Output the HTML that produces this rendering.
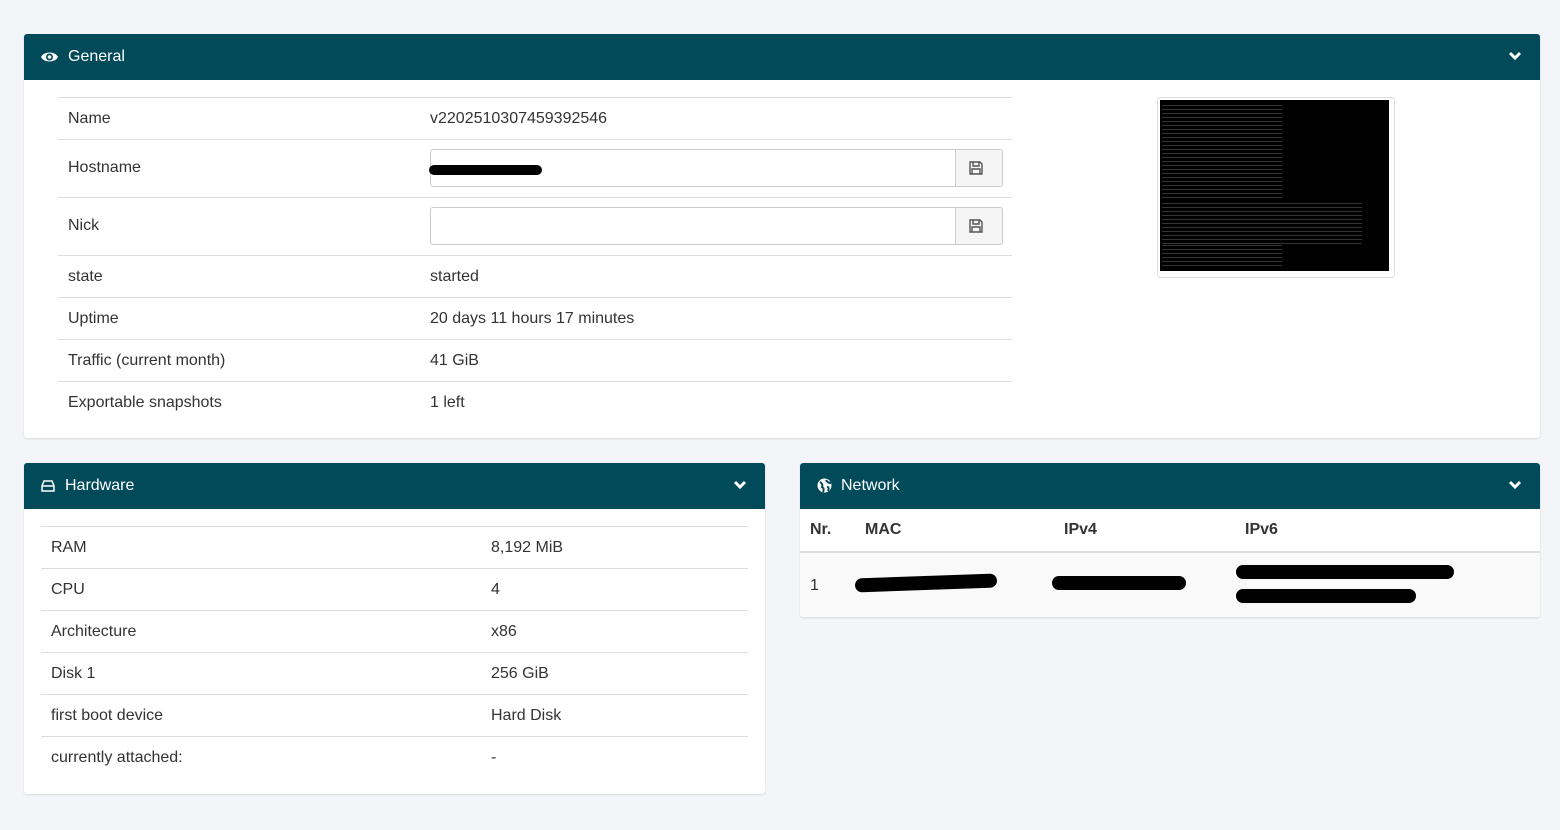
<!DOCTYPE html><html><head><style>
body{margin:0;background:#f4f5f8;font-family:"Liberation Sans",sans-serif;font-size:16px;color:#333;}
.p{position:absolute;background:#fff;border-radius:3px;box-shadow:0 1px 2px rgba(0,0,0,.12);}
.h{height:46px;background:#004a5a;color:#fff;border-radius:3px 3px 0 0;position:relative;font-size:16px;}
.h span{position:absolute;top:14px;}
.h svg{position:absolute;}
.row{position:absolute;border-top:1px solid #ddd;}
.row div{position:absolute;}
.blk{position:absolute;background:#000;border-radius:10px;}
</style></head><body>
<div class="p" style="left:24px;top:34px;width:1516px;height:404px">
<div class="h"><svg style="left:16px;top:16px" width="19" height="14" viewBox="0 0 19 14"><path d="M1 7C4 1 15 1 18 7C15 13 4 13 1 7Z" fill="#fff"/><circle cx="9.5" cy="7" r="3.5" fill="#004a5a"/><circle cx="9.5" cy="7" r="1.8" fill="#fff"/></svg><span style="left:44px">General</span>
<svg style="right:18px;top:17px" width="14" height="10" viewBox="0 0 14 10"><path d="M2 2L7 7L12 2" stroke="#fff" stroke-width="3" fill="none"/></svg></div>
</div>
<div class="row" style="left:58px;top:97px;width:954px;height:42px"><div style="left:10px;top:12px">Name</div><div style="left:372px;top:12px">v2202510307459392546</div></div>
<div class="row" style="left:58px;top:139px;width:954px;height:58px"><div style="left:10px;top:19px">Hostname</div>
<div style="left:372px;top:9px;width:524px;height:36px;border:1px solid #ccc;border-radius:3px 0 0 3px"></div>
<div style="left:897px;top:9px;width:46px;height:36px;border:1px solid #ccc;background:#f5f5f5;border-radius:0 3px 3px 0"></div>
<div class="blk" style="left:371px;top:25px;width:113px;height:10px"></div></div>
<div class="row" style="left:58px;top:197px;width:954px;height:58px"><div style="left:10px;top:19px">Nick</div>
<div style="left:372px;top:9px;width:524px;height:36px;border:1px solid #ccc;border-radius:3px 0 0 3px"></div>
<div style="left:897px;top:9px;width:46px;height:36px;border:1px solid #ccc;background:#f5f5f5;border-radius:0 3px 3px 0"></div></div>
<div class="row" style="left:58px;top:255px;width:954px;height:42px"><div style="left:10px;top:12px">state</div><div style="left:372px;top:12px">started</div></div>
<div class="row" style="left:58px;top:297px;width:954px;height:42px"><div style="left:10px;top:12px">Uptime</div><div style="left:372px;top:12px">20 days 11 hours 17 minutes</div></div>
<div class="row" style="left:58px;top:339px;width:954px;height:42px"><div style="left:10px;top:12px">Traffic (current month)</div><div style="left:372px;top:12px">41 GiB</div></div>
<div class="row" style="left:58px;top:381px;width:954px;height:42px"><div style="left:10px;top:12px">Exportable snapshots</div><div style="left:372px;top:12px">1 left</div></div>
<svg style="position:absolute;left:969px;top:161px" width="14" height="14" viewBox="0 0 14 14"><path d="M1 1H11L13 3V13H1Z M4 1V5H10V1 M3 8H11V13H3Z" stroke="#555" stroke-width="1.4" fill="none"/></svg>
<svg style="position:absolute;left:969px;top:219px" width="14" height="14" viewBox="0 0 14 14"><path d="M1 1H11L13 3V13H1Z M4 1V5H10V1 M3 8H11V13H3Z" stroke="#555" stroke-width="1.4" fill="none"/></svg>
<div style="position:absolute;left:1157px;top:97px;width:232px;height:175px;border:1px solid #ddd;border-radius:4px;padding:2px;background:#fff"><div style="width:229px;height:171px;background:#000;position:relative;overflow:hidden">
<div style="position:absolute;left:2px;top:2px;width:120px;height:165px;background:repeating-linear-gradient(#000 0 3px,#333 3px 4px)"></div>
<div style="position:absolute;left:2px;top:100px;width:200px;height:45px;background:repeating-linear-gradient(#000 0 3px,#333 3px 4px)"></div>
</div></div>

<div class="p" style="left:24px;top:463px;width:741px;height:331px">
<div class="h"><svg style="left:17px;top:17px" width="14" height="12" viewBox="0 0 14 12"><path d="M1 6L3 1H11L13 6V11H1Z M1 6H13" stroke="#fff" stroke-width="1.5" fill="none"/></svg><span style="left:41px">Hardware</span>
<svg style="right:18px;top:17px" width="14" height="10" viewBox="0 0 14 10"><path d="M2 2L7 7L12 2" stroke="#fff" stroke-width="3" fill="none"/></svg></div></div>
<div class="row" style="left:41px;top:526px;width:707px;height:42px"><div style="left:10px;top:12px">RAM</div><div style="left:450px;top:12px">8,192 MiB</div></div>
<div class="row" style="left:41px;top:568px;width:707px;height:42px"><div style="left:10px;top:12px">CPU</div><div style="left:450px;top:12px">4</div></div>
<div class="row" style="left:41px;top:610px;width:707px;height:42px"><div style="left:10px;top:12px">Architecture</div><div style="left:450px;top:12px">x86</div></div>
<div class="row" style="left:41px;top:652px;width:707px;height:42px"><div style="left:10px;top:12px">Disk 1</div><div style="left:450px;top:12px">256 GiB</div></div>
<div class="row" style="left:41px;top:694px;width:707px;height:42px"><div style="left:10px;top:12px">first boot device</div><div style="left:450px;top:12px">Hard Disk</div></div>
<div class="row" style="left:41px;top:736px;width:707px;height:42px"><div style="left:10px;top:12px">currently attached:</div><div style="left:450px;top:12px">-</div></div>

<div class="p" style="left:800px;top:463px;width:740px;height:154px;overflow:hidden">
<div class="h"><svg style="left:17px;top:15px" width="15" height="15" viewBox="0 0 15 15"><circle cx="7.5" cy="7.5" r="7" fill="#fff"/><path d="M3 4C5 5 6 7 5 9C7 10 7 12 6 14M9 2C10 4 12 5 14 5M10 9C12 9 12 11 11 13" stroke="#004a5a" stroke-width="2" fill="none"/></svg><span style="left:41px">Network</span>
<svg style="right:18px;top:17px" width="14" height="10" viewBox="0 0 14 10"><path d="M2 2L7 7L12 2" stroke="#fff" stroke-width="3" fill="none"/></svg></div>
<div style="position:absolute;top:46px;left:0;width:740px;height:42px;border-bottom:2px solid #ddd;font-weight:bold">
<div style="position:absolute;left:10px;top:12px">Nr.</div><div style="position:absolute;left:65px;top:12px">MAC</div><div style="position:absolute;left:264px;top:12px">IPv4</div><div style="position:absolute;left:445px;top:12px">IPv6</div></div>
<div style="position:absolute;top:90px;left:0;width:740px;height:64px;background:#f9f9f9"><div style="position:absolute;left:10px;top:24px">1</div></div>
<div class="blk" style="left:55px;top:113px;width:142px;height:14px;transform:rotate(-2deg)"></div>
<div class="blk" style="left:252px;top:113px;width:134px;height:14px"></div>
<div class="blk" style="left:436px;top:102px;width:218px;height:14px"></div>
<div class="blk" style="left:436px;top:126px;width:180px;height:14px"></div>
</div>
</body></html>
